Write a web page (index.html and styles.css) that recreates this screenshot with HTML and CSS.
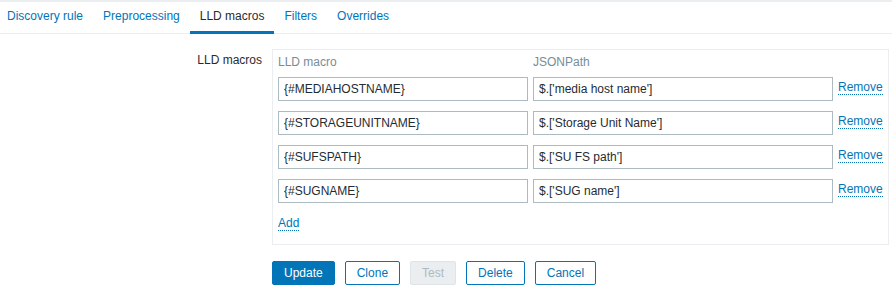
FILE: index.html
```html
<!doctype html>
<html lang="en">

<head>
    <meta charset="UTF-8">
    <title>LLD macros</title>
    <link rel="stylesheet" href="styles.css">
</head>

<body>
    <div class="top-band"></div>
    <ul class="tabs">
        <li class="tab"><a href="#">Discovery rule</a></li>
        <li class="tab"><a href="#">Preprocessing</a></li>
        <li class="tab active"><a href="#">LLD macros</a></li>
        <li class="tab"><a href="#">Filters</a></li>
        <li class="tab"><a href="#">Overrides</a></li>
    </ul>

    <form class="form">
        <label class="form-label">LLD macros</label>
        <div class="macro-box">
            <div class="macro-table">
                <div class="col-head">LLD macro</div>
                <div class="col-head">JSONPath</div>
                <div></div>

                <input class="text-input" type="text" value="{#MEDIAHOSTNAME}">
                <input class="text-input" type="text" value="$.['media host name']">
                <a class="link-action" href="#">Remove</a>

                <input class="text-input" type="text" value="{#STORAGEUNITNAME}">
                <input class="text-input" type="text" value="$.['Storage Unit Name']">
                <a class="link-action" href="#">Remove</a>

                <input class="text-input" type="text" value="{#SUFSPATH}">
                <input class="text-input" type="text" value="$.['SU FS path']">
                <a class="link-action" href="#">Remove</a>

                <input class="text-input" type="text" value="{#SUGNAME}">
                <input class="text-input" type="text" value="$.['SUG name']">
                <a class="link-action" href="#">Remove</a>
            </div>
            <div class="add-row">
                <a class="link-action" href="#">Add</a>
            </div>
        </div>

        <div class="form-buttons">
            <button type="button" class="btn btn-main">Update</button>
            <button type="button" class="btn btn-alt">Clone</button>
            <button type="button" class="btn btn-alt" disabled>Test</button>
            <button type="button" class="btn btn-alt">Delete</button>
            <button type="button" class="btn btn-alt">Cancel</button>
        </div>
    </form>
</body>

</html>
```

FILE: styles.css
```css
* {
    margin: 0;
    padding: 0;
    box-sizing: border-box;
}

body {
    background: #fff;
    color: #1f2c33;
    font-family: "Liberation Sans", Arial, sans-serif;
    font-size: 12px;
    line-height: 14px;
}

a {
    color: #0275b8;
    text-decoration: none;
}

.top-band {
    height: 2px;
    background: #ebeef0;
}

/* tabs */
.tabs {
    display: flex;
    list-style: none;
    padding-left: 7px;
    border-bottom: 1px solid #ebeef0;
}

.tab {
    padding: 0 10px;
    line-height: 29px;
    border-bottom: 3px solid transparent;
    margin-bottom: -1px;
}

.tab:first-child {
    padding-left: 0;
}

.tab.active {
    border-bottom-color: #0275b8;
}

.tab.active a {
    color: #1f2c33;
}

/* form */
.form {
    display: grid;
    grid-template-columns: 262px 1fr;
    column-gap: 10px;
    row-gap: 16px;
    padding: 15px 3px 0 0;
}

.form-label {
    text-align: right;
    padding-top: 4px;
}

.macro-box {
    border: 1px solid #ebeef0;
    padding: 5px 5px 14px 5px;
}

.macro-table {
    display: grid;
    grid-template-columns: 250px 300px 1fr;
    column-gap: 5px;
    row-gap: 10px;
    align-items: center;
}

.col-head {
    color: #768d99;
    margin-bottom: -2px;
}

.text-input {
    height: 24px;
    border: 1px solid #acbbc2;
    padding: 0 5px;
    font-family: inherit;
    font-size: 12px;
    color: #1f2c33;
    background: #fff;
    outline: none;
}

.link-action {
    justify-self: start;
    border-bottom: 1px dotted #0275b8;
    line-height: 13px;
    margin-top: -3px;
}

.add-row {
    padding-top: 13px;
}

.form-buttons {
    grid-column: 2;
    display: flex;
    gap: 10px;
}

.btn {
    height: 24px;
    padding: 0 11px;
    border: 1px solid #0275b8;
    border-radius: 2px;
    font-family: inherit;
    font-size: 12px;
    background: #fff;
    color: #0275b8;
}

.btn-main {
    background: #0275b8;
    color: #fff;
}

.btn:disabled {
    background: #ebeef0;
    border-color: #dfe4e7;
    color: #acbbc2;
}
```
